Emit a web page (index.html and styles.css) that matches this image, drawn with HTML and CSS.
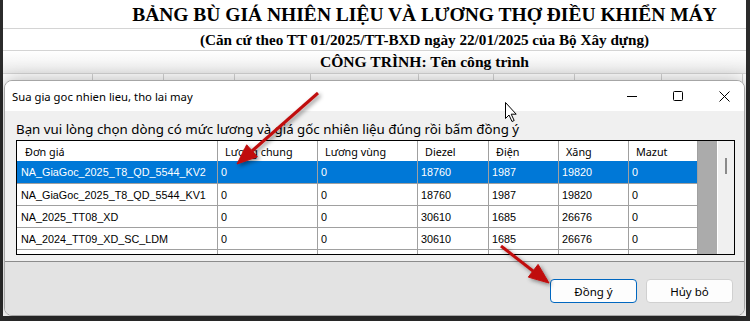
FILE: index.html
```html
<!DOCTYPE html>
<html lang="vi">
<head>
    <meta charset="UTF-8">
    <meta name="viewport" content="width=device-width, initial-scale=1.0">
    <title>Sua gia goc nhien lieu, tho lai may</title>
    <link rel="stylesheet" href="styles.css">
</head>
<body>
    <div class="screen">
        <div class="sheet">
            <div class="srow r1">BẢNG BÙ GIÁ NHIÊN LIỆU VÀ LƯƠNG THỢ ĐIỀU KHIỂN MÁY</div>
            <div class="srow r2">(Căn cứ theo TT 01/2025/TT-BXD ngày 22/01/2025 của Bộ Xây dựng)</div>
            <div class="srow r3">CÔNG TRÌNH: Tên công trình</div>
            <div class="cells">
                <i class="c1"></i><i class="c2"></i><i class="c3"></i><i class="c4"></i><i class="c5"></i>
                <i class="c6"></i><i class="c7"></i><i class="c8"></i><i class="c9"></i>
            </div>
        </div>

        <div class="dialog">
            <div class="titlebar">
                <span class="title">Sua gia goc nhien lieu, tho lai may</span>
                <div class="caption">
                    <span class="cap-btn">
                        <svg width="10" height="10" viewBox="0 0 10 10"><path d="M0 5.5h10" stroke="#000" stroke-width="1"/></svg>
                    </span>
                    <span class="cap-btn">
                        <svg width="10" height="10" viewBox="0 0 10 10"><rect x="0.5" y="0.5" width="9" height="9" rx="1" fill="none" stroke="#000" stroke-width="1"/></svg>
                    </span>
                    <span class="cap-btn">
                        <svg width="11" height="11" viewBox="0 0 11 11"><path d="M0.5 0.5l10 10M10.5 0.5l-10 10" stroke="#000" stroke-width="1"/></svg>
                    </span>
                </div>
            </div>

            <div class="content">
                <div class="hint">Bạn vui lòng chọn dòng có mức lương và giá gốc nhiên liệu đúng rồi bấm đồng ý</div>
                <div class="grid">
                    <div class="data">
                        <div class="grow head">
                            <span>Đơn giá</span><span>Lương chung</span><span>Lương vùng</span><span>Diezel</span><span>Điện</span><span>Xăng</span><span>Mazut</span>
                        </div>
                        <div class="grow sel">
                            <span>NA_GiaGoc_2025_T8_QD_5544_KV2</span><span>0</span><span>0</span><span>18760</span><span>1987</span><span>19820</span><span>0</span>
                        </div>
                        <div class="grow">
                            <span>NA_GiaGoc_2025_T8_QD_5544_KV1</span><span>0</span><span>0</span><span>18760</span><span>1987</span><span>19820</span><span>0</span>
                        </div>
                        <div class="grow">
                            <span>NA_2025_TT08_XD</span><span>0</span><span>0</span><span>30610</span><span>1685</span><span>26676</span><span>0</span>
                        </div>
                        <div class="grow">
                            <span>NA_2024_TT09_XD_SC_LDM</span><span>0</span><span>0</span><span>30610</span><span>1685</span><span>26676</span><span>0</span>
                        </div>
                        <div class="grow">
                            <span></span><span></span><span></span><span></span><span></span><span></span><span></span>
                        </div>
                    </div>
                    <div class="blank"></div>
                    <div class="vscroll"><div class="thumb"></div></div>
                </div>
            </div>

            <div class="footer">
                <button class="btn primary">Đồng ý</button>
                <button class="btn">Hủy bỏ</button>
            </div>
        </div>

        <svg class="overlay" width="750" height="321" viewBox="0 0 750 321">
            <defs>
                <filter id="shade" x="-20%" y="-20%" width="140%" height="140%">
                    <feDropShadow dx="2" dy="2" stdDeviation="2" flood-color="#000" flood-opacity="0.45"/>
                </filter>
            </defs>
            <g filter="url(#shade)" fill="#c00d0d" stroke="#c00d0d">
                <line x1="318" y1="93" x2="252" y2="151" stroke-width="3"/>
                <polygon points="237,164 246.7,144.8 257.3,156.8" stroke-width="1"/>
                <line x1="501" y1="246" x2="533" y2="271" stroke-width="3"/>
                <polygon points="549,283 528.3,277.1 538.1,264.4" stroke-width="1"/>
            </g>
            <path d="M505.5 102.5 v16 l3.5 -3.5 l3 6.5 l2.2 -1 l-3 -6.3 h5 z" fill="#fff" stroke="#000" stroke-width="1" stroke-linejoin="round"/>
        </svg>
    </div>
</body>
</html>
```

FILE: styles.css
```css
* {
    box-sizing: border-box;
}
body {
    margin: 0;
    background: #2b2b2b;
    font-family: "Noto Sans", sans-serif;
}
.screen {
    position: relative;
    width: 750px;
    height: 321px;
    overflow: hidden;
}

/* spreadsheet behind the dialog */
.sheet {
    margin-left: 3px;
    width: 743px;
    height: 316px;
    background: #fff;
}
.srow {
    display: flex;
    align-items: center;
    justify-content: center;
    padding-left: 100px;
    border-bottom: 1px solid #d4d4d4;
    font-family: "Liberation Serif", serif;
    font-weight: bold;
    color: #000;
}
.r1 {
    height: 29px;
    font-size: 19.5px;
    padding-top: 2px;
}
.r2 {
    height: 22px;
    font-size: 15.2px;
}
.r3 {
    height: 23px;
    font-size: 15.6px;
    background: linear-gradient(#fff, #ececec);
}
.cells {
    display: flex;
    height: 40px;
}
.cells i {
    border-right: 1px solid #d4d4d4;
}
.c1 { width: 90px; }
.c2 { width: 71px; }
.c3 { width: 71px; }
.c4 { width: 76px; }
.c5 { width: 108px; }
.c6 { width: 75px; }
.c7 { width: 81px; }
.c8 { width: 87px; }
.c9 { width: 81px; }

/* dialog window */
.dialog {
    position: absolute;
    left: 4px;
    top: 80px;
    width: 741px;
    height: 236px;
    display: flex;
    flex-direction: column;
    border: 1px solid #a6a6a6;
    border-radius: 8px;
    overflow: hidden;
    background: #f0f0f0;
    box-shadow: 0 0 18px rgba(0, 0, 0, 0.3);
}
.titlebar {
    height: 30px;
    flex-shrink: 0;
    display: flex;
    align-items: center;
    background: #fff;
}
.title {
    flex: 1;
    padding-left: 7px;
    font-size: 11.3px;
    color: #000;
}
.caption {
    display: flex;
    height: 100%;
    margin-right: -3px;
}
.cap-btn {
    width: 46px;
    display: flex;
    align-items: center;
    justify-content: center;
}
.content {
    height: 150px;
    flex-shrink: 0;
    padding: 8px 0 0 11px;
}
.hint {
    height: 21px;
    font-size: 13.3px;
    line-height: 21px;
    color: #000;
}
.grid {
    display: flex;
    width: 719px;
    height: 115px;
    border: 1px solid #000;
    background: #ababab;
}
.data {
    width: 681px;
    background: #fff;
    overflow: hidden;
    font-family: "Liberation Sans", sans-serif;
    font-size: 10.8px;
    color: #000;
}
.grow {
    display: grid;
    grid-template-columns: 201px 100px 100px 71px 70px 70px 69px;
    height: 22px;
}
.grow span {
    display: flex;
    align-items: center;
    padding-left: 4px;
    border-right: 1px solid #a0a0a0;
    border-bottom: 1px solid #a0a0a0;
    white-space: nowrap;
    overflow: hidden;
}
.grow span:nth-child(n+2) {
    padding-left: 3px;
}
.head {
    height: 20px;
}
.head span {
    border-bottom: none;
    padding-left: 8px;
    font-family: "Noto Sans", sans-serif;
    font-size: 10.8px;
}
.head span:nth-child(n+2) {
    padding-left: 7px;
}
.sel {
    height: 23px;
    background: #0078d7;
    color: #fff;
}
.blank {
    width: 19px;
    background: #ababab;
}
.vscroll {
    width: 17px;
    border-left: 1px solid #fff;
    background: #f0f0f0;
    padding: 17px 0 0 7px;
}
.thumb {
    width: 2px;
    height: 16px;
    background: #8a8a8a;
}

.footer {
    flex: 1;
    display: flex;
    justify-content: flex-end;
    align-items: flex-start;
    gap: 9px;
    padding: 17px 11px 0 0;
    border-top: 1px solid #8c8c8c;
    background: #e3e3e3;
}
.btn {
    width: 87px;
    height: 24px;
    border: 1px solid #d0d0d0;
    border-radius: 4px;
    background: #fdfdfd;
    font-family: "Noto Sans", sans-serif;
    font-size: 11.5px;
    color: #000;
}
.btn.primary {
    border-color: #0067c0;
}

.overlay {
    position: absolute;
    left: 0;
    top: 0;
    pointer-events: none;
}
```
